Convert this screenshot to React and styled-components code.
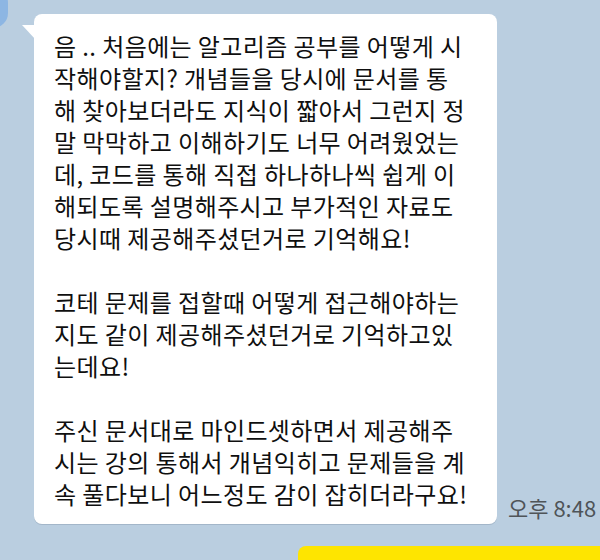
import React from 'react';
import styled, { createGlobalStyle } from 'styled-components';

const GlobalStyle = createGlobalStyle`
  html, body {
    margin: 0;
    padding: 0;
    background: #bacee0;
  }
`

const ChatRoom = styled.div`
  width: 600px;
  height: 560px;
  overflow: hidden;
  padding-top: 14px;
  box-sizing: border-box;
  background: #bacee0;
  font-family: "Noto Sans CJK KR", "Noto Sans", sans-serif;
`
const IncomingRow = styled.div`
  display: flex;
  align-items: flex-start;
`
const Avatar = styled.div`
  flex-shrink: 0;
  width: 40px;
  height: 40px;
  margin: -26px 0 0 -32px;
  border-radius: 15px;
  background: #8db6e3;
`
const Bubble = styled.div`
  position: relative;
  flex-shrink: 0;
  width: 463px;
  box-sizing: border-box;
  margin-left: 26px;
  padding: 16px 14px 14px 20px;
  border-radius: 8px;
  background: #ffffff;
  box-shadow: 0 1px 0 rgba(60, 80, 100, 0.18);
  color: #0f0f0f;
  font-size: 24px;
  letter-spacing: 0.4px;
  line-height: 32px;
  white-space: pre;

  &::before {
    content: '';
    position: absolute;
    left: -12px;
    top: 11px;
    width: 14px;
    height: 15px;
    background: #ffffff;
    clip-path: polygon(0 0, 100% 0, 100% 100%);
  }
`
const Time = styled.span`
  align-self: flex-end;
  flex-shrink: 0;
  margin: 0 0 1px 11px;
  color: #4f5458;
  font-size: 22px;
  white-space: nowrap;
`
const OutgoingRow = styled.div`
  display: flex;
  margin-top: 22px;
  padding-left: 298px;
`
const MyBubble = styled.div`
  display: flex;
  justify-content: flex-end;
  align-items: flex-end;
  flex-shrink: 0;
  width: 320px;
  height: 60px;
  padding: 10px 40px 0 0;
  box-sizing: border-box;
  border-radius: 8px;
  background: #fee500;
`
const Attachment = styled.div`
  width: 40px;
  height: 40px;
  margin-bottom: -36px;
  border-radius: 50%;
  background: #ffffff;
`

const message = `음 .. 처음에는 알고리즘 공부를 어떻게 시
작해야할지? 개념들을 당시에 문서를 통
해 찾아보더라도 지식이 짧아서 그런지 정
말 막막하고 이해하기도 너무 어려웠었는
데, 코드를 통해 직접 하나하나씩 쉽게 이
해되도록 설명해주시고 부가적인 자료도
당시때 제공해주셨던거로 기억해요!

코테 문제를 접할때 어떻게 접근해야하는
지도 같이 제공해주셨던거로 기억하고있
는데요!

주신 문서대로 마인드셋하면서 제공해주
시는 강의 통해서 개념익히고 문제들을 계
속 풀다보니 어느정도 감이 잡히더라구요!`

const App = () => {
  return (
    <>
      <GlobalStyle />
      <ChatRoom>
        <IncomingRow>
          <Avatar />
          <Bubble>{message}</Bubble>
          <Time>오후 8:48</Time>
        </IncomingRow>
        <OutgoingRow>
          <MyBubble>
            <Attachment />
          </MyBubble>
        </OutgoingRow>
      </ChatRoom>
    </>
  )
}

export default App;
